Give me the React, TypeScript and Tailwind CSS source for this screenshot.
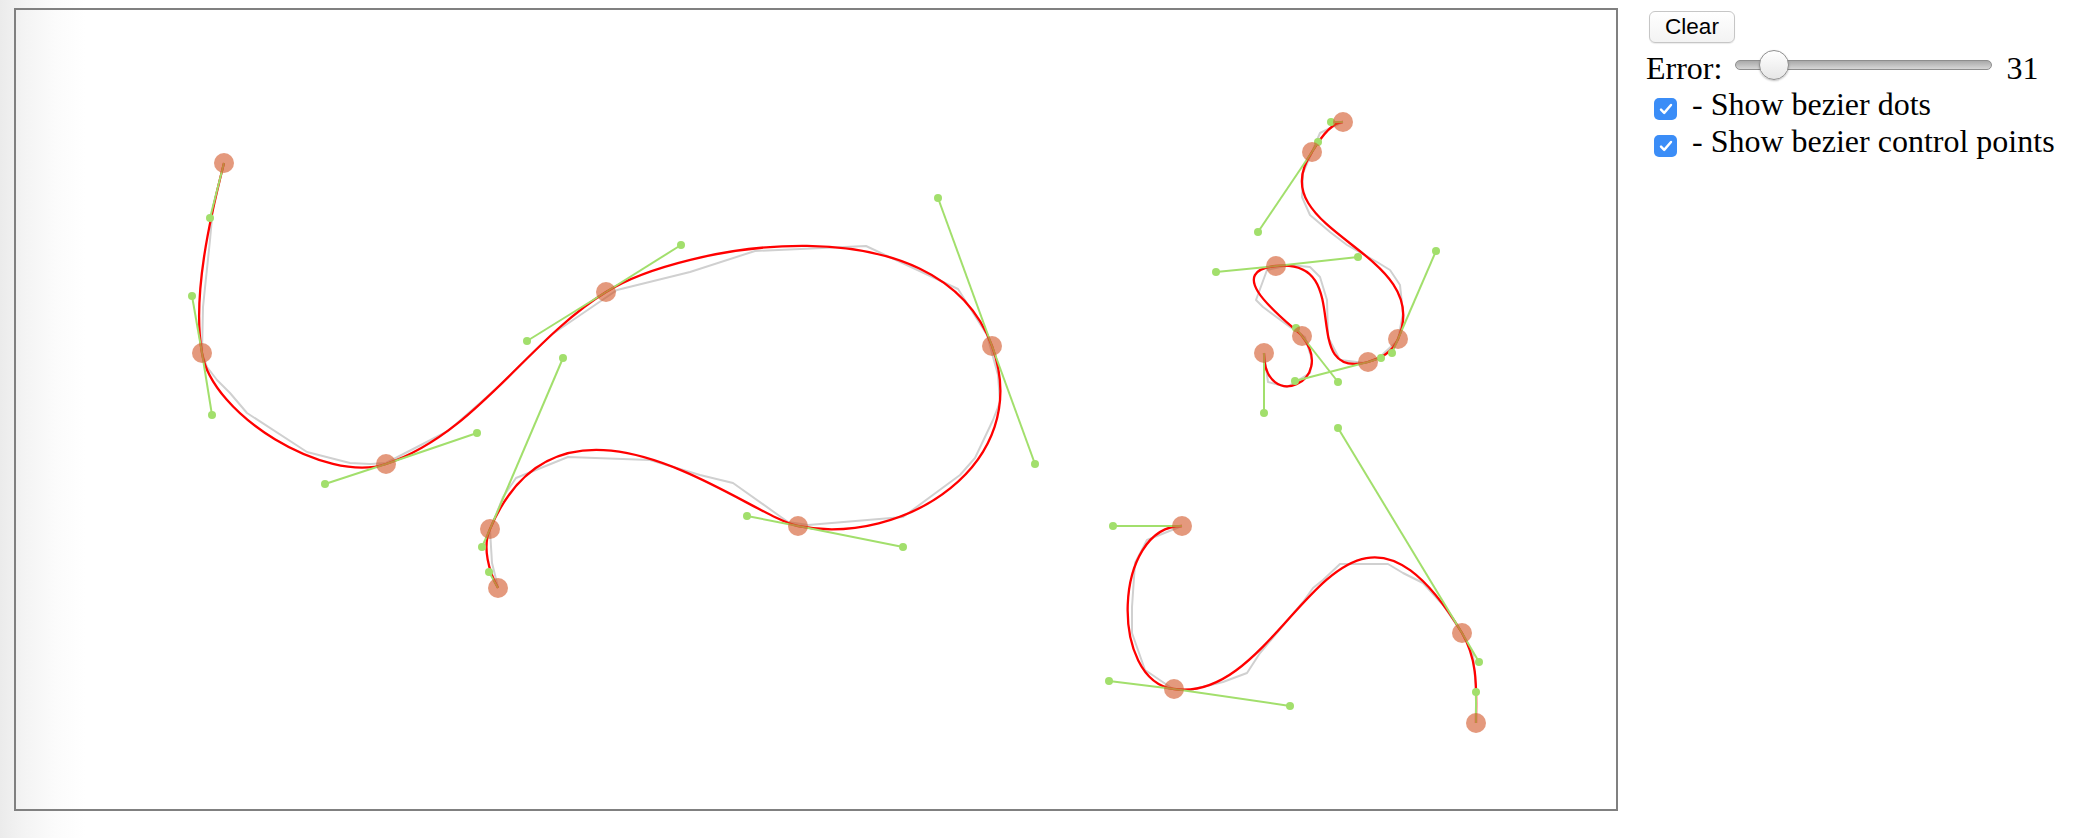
type Pt = [number, number];
type Seg = [Pt, Pt, Pt, Pt];

// fitted curves, in page pixels
const CURVES: Seg[][] = [
  [
    [[224, 163], [210, 218], [192, 296], [202, 353]],
    [[202, 353], [212, 415], [325, 484], [386, 464]],
    [[386, 464], [477, 433], [527, 341], [606, 292]],
    [[606, 292], [681, 245], [938, 198], [992, 346]],
    [[992, 346], [1035, 464], [903, 547], [798, 526]],
    [[798, 526], [747, 516], [563, 358], [490, 529]],
    [[490, 529], [482, 547], [489, 572], [498, 588]],
  ],
  [
    [[1343, 122], [1331, 122], [1318, 142], [1312, 152]],
    [[1312, 152], [1258, 232], [1436, 251], [1398, 339]],
    [[1398, 339], [1392, 353], [1381, 358], [1368, 362]],
    [[1368, 362], [1295, 381], [1358, 257], [1276, 266]],
    [[1276, 266], [1216, 272], [1296, 328], [1302, 336]],
    [[1302, 336], [1338, 382], [1264, 413], [1264, 353]],
  ],
  [
    [[1182, 526], [1113, 526], [1109, 681], [1174, 689]],
    [[1174, 689], [1290, 706], [1338, 428], [1462, 633]],
    [[1462, 633], [1479, 662], [1476, 692], [1476, 723]],
  ],
];

// raw mouse strokes
const STROKES: Pt[][] = [
  [
    [224, 163], [213, 207], [210, 240], [203, 307], [202, 353], [207, 367], [217, 380], [230, 393],
    [247, 413], [307, 452], [350, 463], [370, 464], [386, 463], [448, 431], [480, 403], [500, 385],
    [551, 335], [617, 290], [690, 272], [755, 251], [866, 246], [958, 289], [987, 335], [998, 375],
    [1000, 402], [993, 420], [975, 458], [960, 475], [903, 517], [808, 525], [788, 522], [733, 483],
    [700, 475], [650, 460], [568, 457], [516, 478], [503, 497], [490, 530], [492, 563], [498, 587],
  ],
  [
    [1343, 122], [1320, 133], [1312, 152], [1303, 173], [1302, 197], [1310, 215], [1330, 232],
    [1347, 245], [1377, 262], [1390, 270], [1400, 285], [1403, 313], [1398, 340], [1380, 357],
    [1365, 363], [1340, 360], [1328, 337], [1327, 300], [1320, 277], [1310, 267], [1290, 265],
    [1267, 270], [1256, 300], [1263, 307], [1290, 327], [1305, 337], [1312, 360], [1310, 373],
    [1287, 387], [1268, 382], [1264, 353],
  ],
  [
    [1182, 526], [1147, 540], [1135, 563], [1132, 607], [1132, 633], [1145, 670], [1173, 689],
    [1190, 690], [1223, 682], [1247, 673], [1260, 653], [1303, 602], [1313, 588], [1323, 580],
    [1340, 564], [1388, 564], [1403, 573], [1423, 583], [1443, 605], [1462, 633], [1473, 653],
    [1476, 690], [1476, 723],
  ],
];

function pathOf(segs: Seg[]) {
  const [s] = segs;
  let d = `M${s[0][0]} ${s[0][1]}`;
  for (const [, c1, c2, p] of segs) d += ` C${c1[0]} ${c1[1]} ${c2[0]} ${c2[1]} ${p[0]} ${p[1]}`;
  return d;
}

function Drawing() {
  const handles: [Pt, Pt][] = [];
  const dots: Pt[] = [];
  CURVES.forEach((segs) => {
    dots.push(segs[0][0]);
    segs.forEach(([p0, c1, c2, p3]) => {
      handles.push([p0, c1], [p3, c2]);
      dots.push(p3);
    });
  });

  return (
    <svg width={1600} height={799} viewBox="16 10 1600 799" className="block">
      {STROKES.map((pts, i) => (
        <polyline
          key={i}
          points={pts.map((p) => p.join(",")).join(" ")}
          fill="none"
          stroke="#d0d0d0"
          strokeWidth={2}
          strokeLinejoin="round"
        />
      ))}
      {CURVES.map((segs, i) => (
        <path key={i} d={pathOf(segs)} fill="none" stroke="#ff0000" strokeWidth={2.3} />
      ))}
      {handles.map(([a, b], i) => (
        <g key={i}>
          <line x1={a[0]} y1={a[1]} x2={b[0]} y2={b[1]} stroke="#a2df6c" strokeWidth={2} />
          <circle cx={b[0]} cy={b[1]} r={4} fill="#a2df6c" />
        </g>
      ))}
      {dots.map((p, i) => (
        <circle key={i} cx={p[0]} cy={p[1]} r={10} fill="rgba(210,85,38,0.6)" />
      ))}
    </svg>
  );
}

function Check({ label }: { label: string }) {
  return (
    <label className="flex h-[37px] items-start leading-[37px]">
      <span className="ml-[8px] mt-[12px] flex h-[22px] w-[23px] items-center justify-center rounded-[5px] bg-[#3b8df7]">
        <svg width="16" height="16" viewBox="0 0 16 16">
          <path d="M3 8.6l3.2 3.3L13 4" fill="none" stroke="#fff" strokeWidth={2.4} strokeLinecap="round" strokeLinejoin="round" />
        </svg>
      </span>
      <span className="ml-[15px]">- {label}</span>
    </label>
  );
}

export default function App() {
  return (
    <div className="flex h-[838px] w-full bg-[linear-gradient(to_right,#ebebeb,#f4f4f4_25px,#fbfbfb_55px,#ffffff_85px)] font-['Liberation_Serif',serif] text-[32px] text-black">
      <div className="ml-[14px] mt-[8px] h-[803px] w-[1604px] shrink-0 border-2 border-[#808080]">
        <Drawing />
      </div>

      <div className="ml-[28px] flex flex-col pt-[11px]">
        <button className="ml-[3px] h-[32px] w-[86px] rounded-[6px] border border-[#c6c6c6] bg-[linear-gradient(#ffffff,#f3f3f3)] font-['Liberation_Sans',sans-serif] text-[22.5px] leading-[30px] shadow-[0_1px_1px_rgba(0,0,0,0.08)]">
          Clear
        </button>

        <div className="mt-[8px] flex h-[35px] items-start leading-[35px]">
          <span>Error:</span>
          <div className="relative ml-[13px] mt-[-1px] h-[30px] w-[257px]">
            <div className="absolute left-0 right-0 top-[10px] h-[10px] rounded-full border border-[#8e8e8e] bg-[linear-gradient(#a9a9a9,#d6d6d6)]" />
            <div className="absolute left-[24px] top-0 h-[30px] w-[30px] rounded-full border border-[#8f8f8f] bg-[linear-gradient(#ffffff,#e6e6e6)] shadow-[0_1px_2px_rgba(0,0,0,0.25)]" />
          </div>
          <span className="ml-[14px]">31</span>
        </div>

        <Check label="Show bezier dots" />
        <Check label="Show bezier control points" />
      </div>
    </div>
  );
}
